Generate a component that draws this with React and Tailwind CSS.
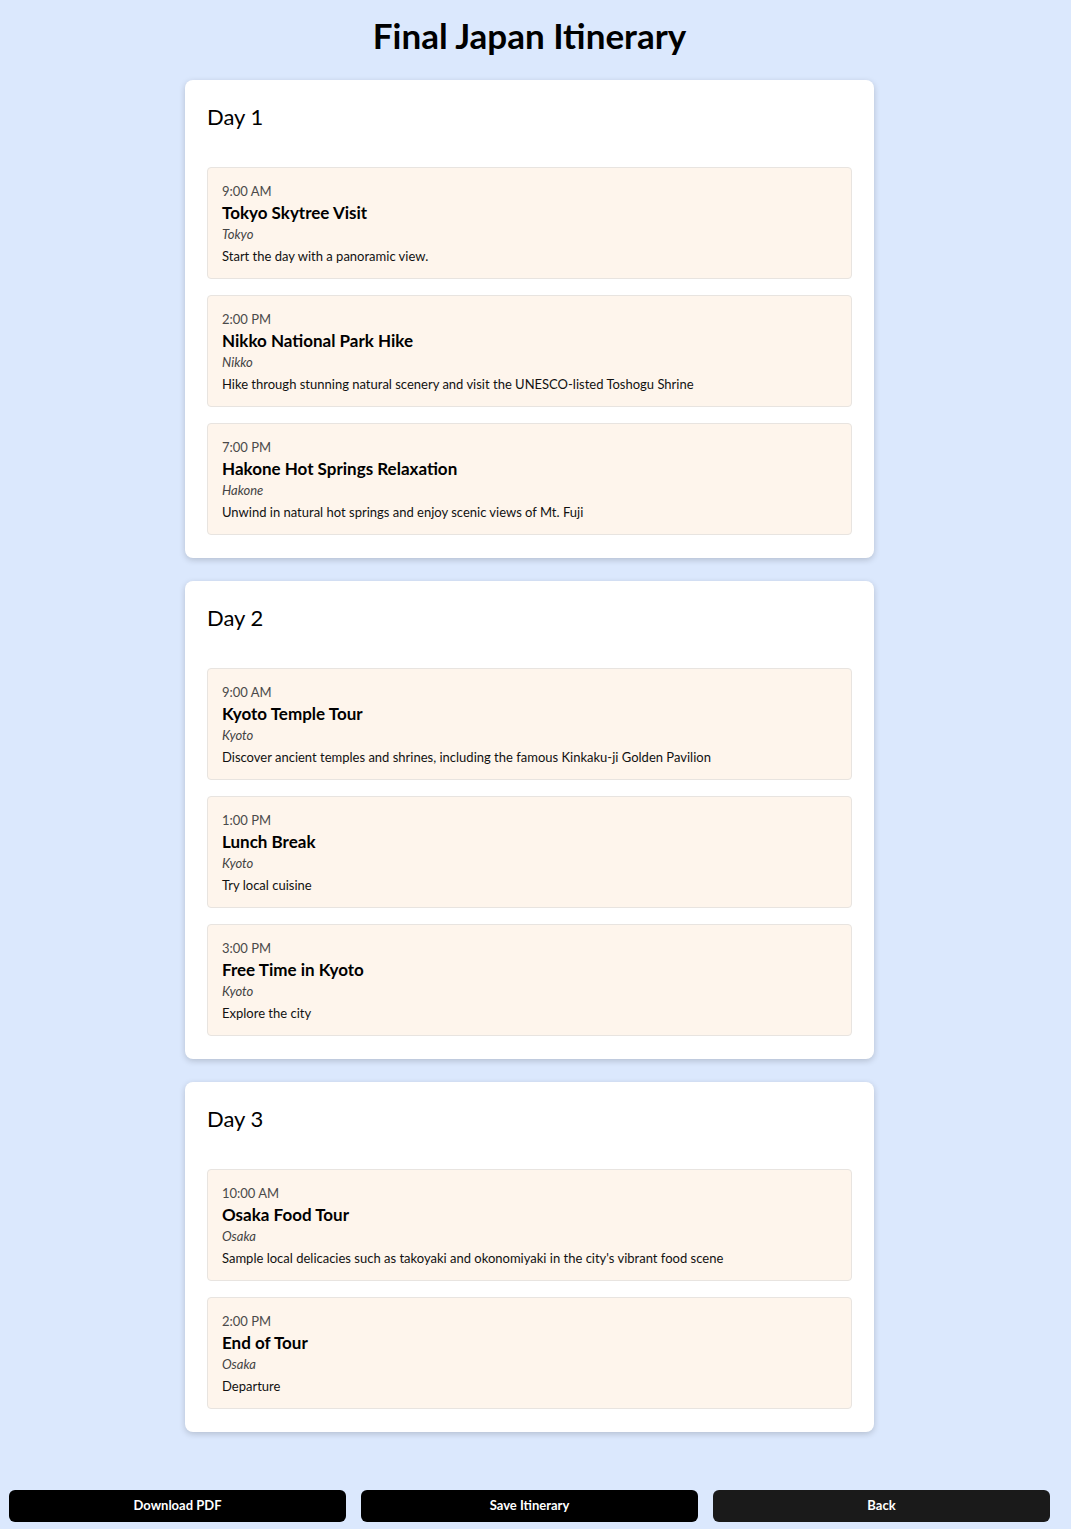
import React from "react";

const days = [
  {
    day: "Day 1",
    items: [
      { time: "9:00 AM", title: "Tokyo Skytree Visit", place: "Tokyo", text: "Start the day with a panoramic view." },
      { time: "2:00 PM", title: "Nikko National Park Hike", place: "Nikko", text: "Hike through stunning natural scenery and visit the UNESCO-listed Toshogu Shrine" },
      { time: "7:00 PM", title: "Hakone Hot Springs Relaxation", place: "Hakone", text: "Unwind in natural hot springs and enjoy scenic views of Mt. Fuji" },
    ],
  },
  {
    day: "Day 2",
    items: [
      { time: "9:00 AM", title: "Kyoto Temple Tour", place: "Kyoto", text: "Discover ancient temples and shrines, including the famous Kinkaku-ji Golden Pavilion" },
      { time: "1:00 PM", title: "Lunch Break", place: "Kyoto", text: "Try local cuisine" },
      { time: "3:00 PM", title: "Free Time in Kyoto", place: "Kyoto", text: "Explore the city" },
    ],
  },
  {
    day: "Day 3",
    items: [
      { time: "10:00 AM", title: "Osaka Food Tour", place: "Osaka", text: "Sample local delicacies such as takoyaki and okonomiyaki in the city's vibrant food scene" },
      { time: "2:00 PM", title: "End of Tour", place: "Osaka", text: "Departure" },
    ],
  },
];

const ActivityCard = ({ item }) => (
  <div className="h-[112px] rounded border border-[#e8e4e0] bg-[#fef5ec] px-[14px] pt-[15px]">
    <p className="text-[13px] leading-[16px] text-[#4a4a4a]">{item.time}</p>
    <h3 className="mt-[4px] text-[17px] font-bold leading-[20px] text-black">{item.title}</h3>
    <p className="mt-[2px] text-[13px] italic leading-[18px] text-[#444]">{item.place}</p>
    <p className="mt-[4px] text-[13px] leading-[18px] text-[#111]">{item.text}</p>
  </div>
);

export default function App() {
  return (
    <div className="min-h-[1529px] w-full bg-[#dbe8fd] font-['Lato','Noto_Sans',sans-serif]">
      <div className="w-[1059px] pb-[7px]">
        <h1 className="pt-[14px] text-center text-[35px] font-bold leading-[42px] text-black">
          Final Japan Itinerary
        </h1>

        <div className="mt-[24px] flex flex-col items-center gap-[23px]">
          {days.map((d) => (
            <div
              key={d.day}
              className="w-[689px] rounded-lg bg-white px-[22px] pt-[22px] pb-[23px] shadow-[0_2px_6px_rgba(0,0,0,0.18)]"
            >
              <h2 className="text-[22px] leading-[30px] text-black">{d.day}</h2>
              <div className="mt-[35px] flex flex-col gap-[16px]">
                {d.items.map((item) => (
                  <ActivityCard key={item.title} item={item} />
                ))}
              </div>
            </div>
          ))}
        </div>

        <div className="mt-[58px] flex gap-[15px] px-[9px]">
          <button type="button" className="h-[32px] w-[337px] rounded-md bg-black text-[13px] font-bold text-white">
            Download PDF
          </button>
          <button type="button" className="h-[32px] w-[337px] rounded-md bg-black text-[13px] font-bold text-white">
            Save Itinerary
          </button>
          <button type="button" className="h-[32px] w-[337px] rounded-md bg-[#1a1a1a] text-[13px] font-bold text-white">
            Back
          </button>
        </div>
      </div>
    </div>
  );
}
